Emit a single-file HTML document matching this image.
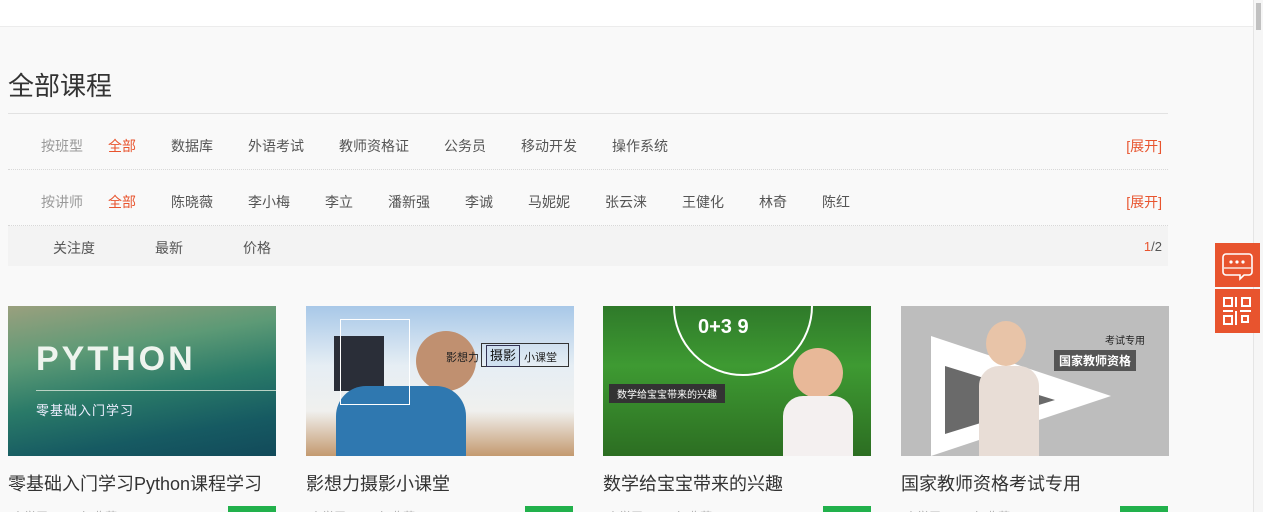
<!DOCTYPE html>
<html><head><meta charset="utf-8">
<style>
*{margin:0;padding:0;box-sizing:border-box}
html,body{width:1263px;height:512px;overflow:hidden}
body{background:#f9f9f9;font-family:"Liberation Sans","Noto Sans CJK SC",sans-serif;position:relative}
.top{position:absolute;left:0;top:0;width:1253px;height:27px;background:#fff;border-bottom:1px solid #ececec}
.sb{position:absolute;right:0;top:0;width:10px;height:512px;background:#f6f6f6;border-left:1px solid #e5e5e5}
.sb i{position:absolute;left:2px;top:3px;width:5px;height:27px;background:#c1c1c1}
h1{position:absolute;left:8px;top:66px;font-size:26px;font-weight:normal;color:#333}
.hr{position:absolute;left:8px;top:113px;width:1160px;border-top:1px solid #e2e2e2}
.row{position:absolute;left:8px;width:1160px;height:56px;font-size:14px;color:#555;border-bottom:1px dotted #d8d8d8}
.row span{position:absolute;top:22px;white-space:nowrap}
.lab{color:#999}.on{color:#e8542e}
.ex{right:6px;color:#e8542e}
.sort{position:absolute;left:8px;top:226px;width:1160px;height:40px;background:#f3f3f3;font-size:14px;color:#555}
.sort span{position:absolute;top:12px}
.card{position:absolute;top:306px;width:268px}
.img{height:150px;position:relative;overflow:hidden}
.t{position:absolute;top:470px;font-size:18px;color:#333;white-space:nowrap}
.meta{position:absolute;top:508px;font-size:12px;color:#aaa}
.g{position:absolute;top:506px;width:48px;height:10px;background:#22b14c}
.side{position:absolute;left:1215px;width:45px;height:44px;background:#e8542e}
</style></head><body>
<div class="top"></div>
<div class="sb"><i></i></div>
<h1>全部课程</h1>
<div class="hr"></div>
<div class="row" style="top:114px">
<span class="lab" style="left:33px">按班型</span><span class="on" style="left:100px">全部</span><span style="left:163px">数据库</span><span style="left:240px">外语考试</span><span style="left:331px">教师资格证</span><span style="left:436px">公务员</span><span style="left:513px">移动开发</span><span style="left:604px">操作系统</span><span class="ex">[展开]</span></div>
<div class="row" style="top:170px">
<span class="lab" style="left:33px">按讲师</span><span class="on" style="left:100px">全部</span><span style="left:163px">陈晓薇</span><span style="left:240px">李小梅</span><span style="left:317px">李立</span><span style="left:380px">潘新强</span><span style="left:457px">李诚</span><span style="left:520px">马妮妮</span><span style="left:597px">张云涞</span><span style="left:674px">王健化</span><span style="left:751px">林奇</span><span style="left:814px">陈红</span><span class="ex">[展开]</span></div>
<div class="sort"><span style="left:45px">关注度</span><span style="left:147px">最新</span><span style="left:235px">价格</span><span style="right:6px;font-size:13px;top:13px"><b style="color:#e8542e;font-weight:normal">1</b>/2</span></div>

<div class="card" style="left:8px"><div class="img" style="background:linear-gradient(170deg,#9aa07e 0%,#5d9a76 30%,#2a7a68 55%,#165a62 80%,#124a5a 100%)">
<div style="position:absolute;left:28px;top:34px;font-size:34px;font-weight:bold;letter-spacing:3px;color:#eef4ee;font-family:'Liberation Sans',sans-serif">PYTHON</div>
<div style="position:absolute;left:28px;top:84px;width:240px;border-top:1px solid #b9d2c4"></div>
<div style="position:absolute;left:28px;top:94px;font-size:13px;color:#eef;letter-spacing:1px">零基础入门学习</div></div></div>

<div class="card" style="left:306px"><div class="img" style="background:linear-gradient(180deg,#a8c8e8 0%,#e6eef4 40%,#f0f0ee 70%,#c49a70 100%)">
<div style="position:absolute;left:110px;top:25px;width:60px;height:60px;border-radius:50%;background:#c09070"></div>
<div style="position:absolute;left:28px;top:30px;width:50px;height:55px;background:#2a2e38"></div>
<div style="position:absolute;left:30px;top:80px;width:130px;height:70px;background:#2f78b0;border-radius:30px 30px 0 0"></div>
<div style="position:absolute;left:34px;top:13px;width:70px;height:86px;border:1px solid #fff"></div>
<div style="position:absolute;left:140px;top:43px;font-size:11px;color:#222">影想力</div>
<div style="position:absolute;left:175px;top:37px;width:88px;height:24px;border:1px solid #333"></div>
<div style="position:absolute;left:180px;top:39px;width:34px;height:22px;border:1px solid #335;background:#cfe0f0;font-size:13px;color:#111;text-align:center;line-height:20px">摄影</div>
<div style="position:absolute;left:218px;top:43px;font-size:11px;color:#222">小课堂</div></div></div>

<div class="card" style="left:603px"><div class="img" style="background:linear-gradient(180deg,#2f7a2a 0%,#3e9a32 40%,#2c6e22 100%)">
<div style="position:absolute;left:70px;top:-70px;width:140px;height:140px;border-radius:50%;border:2px solid #fff"></div>
<div style="position:absolute;left:95px;top:10px;font-size:20px;font-weight:bold;color:#fff">0+3 9</div>
<div style="position:absolute;left:6px;top:78px;padding:2px 8px;background:#333;font-size:10px;color:#fff">数学给宝宝带来的兴趣</div>
<div style="position:absolute;left:190px;top:42px;width:50px;height:50px;border-radius:50%;background:#e8b898"></div>
<div style="position:absolute;left:180px;top:90px;width:70px;height:60px;background:#f4f0f0;border-radius:20px 20px 0 0"></div></div></div>

<div class="card" style="left:901px"><div class="img" style="background:#bdbdbd">
<div style="position:absolute;left:30px;top:30px;width:0;height:0;border-top:60px solid transparent;border-bottom:60px solid transparent;border-left:180px solid #fff"></div>
<div style="position:absolute;left:44px;top:60px;width:0;height:0;border-top:34px solid transparent;border-bottom:34px solid transparent;border-left:110px solid #6a6a6a"></div>
<div style="position:absolute;left:85px;top:15px;width:40px;height:45px;border-radius:50%;background:#e8c4a8"></div>
<div style="position:absolute;left:78px;top:60px;width:60px;height:90px;background:#e8ddd6;border-radius:20px 20px 0 0"></div>
<div style="position:absolute;left:204px;top:26px;font-size:10px;color:#222">考试专用</div>
<div style="position:absolute;left:153px;top:44px;padding:2px 5px;background:#555;font-size:12px;color:#fff;font-weight:bold">国家教师资格</div></div></div>

<div class="t" style="left:8px">零基础入门学习Python课程学习</div>
<div class="t" style="left:306px">影想力摄影小课堂</div>
<div class="t" style="left:603px">数学给宝宝带来的兴趣</div>
<div class="t" style="left:901px">国家教师资格考试专用</div>
<div class="meta" style="left:12px">人学习 | 1 1 人 收藏</div><div class="g" style="left:228px"></div>
<div class="meta" style="left:310px">人学习 | 1 1 人 收藏</div><div class="g" style="left:525px"></div>
<div class="meta" style="left:607px">人学习 | 1 1 人 收藏</div><div class="g" style="left:823px"></div>
<div class="meta" style="left:905px">人学习 | 1 1 人 收藏</div><div class="g" style="left:1120px"></div>

<div class="side" style="top:243px"><svg width="45" height="44" viewBox="0 0 45 44"><path d="M11 11h23a3 3 0 0 1 3 3v15a3 3 0 0 1-3 3h-5l-4 4v-4H11a3 3 0 0 1-3-3V14a3 3 0 0 1 3-3z" fill="none" stroke="#fff" stroke-width="1.6"/><path d="M9 25h27" stroke="#fff" stroke-width="1.2"/><circle cx="16" cy="19" r="1.6" fill="#fff"/><circle cx="22" cy="19" r="1.6" fill="#fff"/><circle cx="28" cy="19" r="1.6" fill="#fff"/></svg></div>
<div class="side" style="top:289px"><svg width="45" height="44" viewBox="0 0 45 44" fill="none" stroke="#fff" stroke-width="2"><rect x="9" y="9" width="8" height="8"/><rect x="27" y="9" width="8" height="8"/><rect x="9" y="27" width="8" height="8"/><rect x="27" y="27" width="6" height="6"/><path d="M21 8v10M21 22v14M8 22h10M25 22h11"/></svg></div>
</body></html>
